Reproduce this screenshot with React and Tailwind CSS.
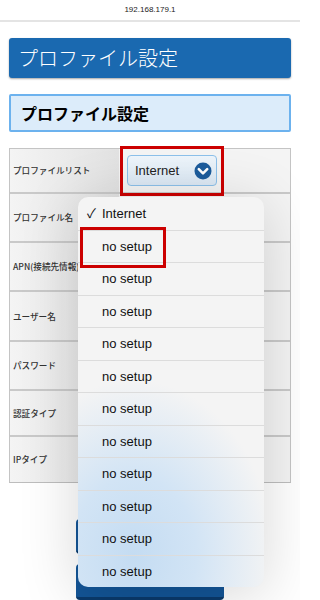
import React from 'react';

const jp = { fontFamily: '"Noto Sans CJK JP", "Liberation Sans", sans-serif' };
const latin = { fontFamily: '"Liberation Sans", "Noto Sans CJK JP", sans-serif' };

const rows = [
  { label: 'プロファイルリスト', h: 'h-[45px]' },
  { label: 'プロファイル名', h: 'h-[49px]' },
  { label: 'APN(接続先情報)', h: 'h-[49px]' },
  { label: 'ユーザー名', h: 'h-[50px]' },
  { label: 'パスワード', h: 'h-[49px]' },
  { label: '認証タイプ', h: 'h-[46px]' },
  { label: 'IPタイプ', h: 'h-[45px]' },
];

const options = ['Internet', ...Array(11).fill('no setup')];

const SelectBox = () => (
  <div className="ml-[8px] flex h-[31px] w-[90px] items-center justify-between rounded-[4px] border border-[#8cc0ea] bg-gradient-to-b from-[#eef5fb] to-[#dbe8f4] pl-[7px] pr-[4px]">
    <span className="text-[13px] text-[#222]" style={latin}>Internet</span>
    <svg width="18" height="18" viewBox="0 0 18 18">
      <circle cx="9" cy="9" r="8.5" fill="#1c5c9c" />
      <path d="M4.8 7.2 L9 11.4 L13.2 7.2" fill="none" stroke="#fff" strokeWidth="2.6" strokeLinecap="round" strokeLinejoin="round" />
    </svg>
  </div>
);

export default function App() {
  return (
    <div className="relative h-[600px] w-[300px] overflow-hidden bg-white">
      {/* address bar */}
      <div className="flex h-[22px] items-center justify-center border-b-2 border-[#e4e4e4] bg-white">
        <span className="text-[8px] text-[#222]" style={latin}>192.168.179.1</span>
      </div>

      <div className="px-[9px]">
        <div className="mt-[16px] flex h-[40px] items-center rounded-[3px] bg-[#1a69b0] pl-[9px] shadow-[0_1px_2px_rgba(0,0,0,0.35)]">
          <span className="text-[20px] font-light text-white" style={jp}>プロファイル設定</span>
        </div>

        <div className="mt-[16px] flex h-[38px] items-center rounded-[2px] border-2 border-[#6cb2ee] bg-[#dcecfa] pl-[10px]">
          <span className="text-[16px] font-bold text-black" style={jp}>プロファイル設定</span>
        </div>

        <div className="mt-[16px] border border-[#c4c4c4] border-b-[#bdbdbd]">
          {rows.map((r, i) => (
            <div key={i} className={`flex ${r.h} ${i < rows.length - 1 ? 'border-b-2 border-[#c9c9c9]' : ''}`}>
              <div className="flex w-[109px] items-center bg-gradient-to-r from-[#f4f4f4] to-[#e2e2e2] pl-[3px]">
                <span className="text-[8.6px] font-medium text-[#333]" style={jp}>{r.label}</span>
              </div>
              <div className="flex flex-1 items-center bg-[#f4f4f4]">
                {i === 0 && <SelectBox />}
              </div>
            </div>
          ))}
        </div>

        <div className="mt-[36px] flex flex-col items-center gap-[10px]">
          <div className="h-[35px] w-[148px] rounded-[4px] border-b-[3px] border-[#0a3a6c] bg-[#135597]" />
          <div className="h-[36px] w-[148px] rounded-[4px] border-b-[3px] border-[#0a3a6c] bg-[#135597]" />
        </div>
      </div>

      {/* red highlight box around the select */}
      <div className="absolute left-[120px] top-[146px] h-[50px] w-[104px] border-[3px] border-[#cc0000]" />

      {/* select popover, tinted by the blurred buttons underneath */}
      <div
        className="absolute left-[78px] top-[197px] w-[186px] overflow-hidden rounded-[10px] bg-[#f4f4f4] bg-[radial-gradient(ellipse_75%_45%_at_30%_92%,#c4dcf2_0%,#d2e4f5_45%,#f4f4f4_100%)] shadow-[0_8px_60px_rgba(0,0,0,0.16)]"
        style={latin}
      >
        {options.map((o, i) => (
          <div key={i} className={`relative flex h-[32.5px] items-center pl-[24px] ${i > 0 ? 'border-t border-[#dcdcdc]' : ''}`}>
            {i === 0 && <span className="absolute left-[9px] text-[13px] text-[#111]">✓</span>}
            <span className="text-[13px] text-[#111]">{o}</span>
          </div>
        ))}
      </div>

      <div className="absolute left-[80px] top-[227px] h-[41px] w-[86px] border-[3px] border-[#cc0000]" />
    </div>
  );
}
